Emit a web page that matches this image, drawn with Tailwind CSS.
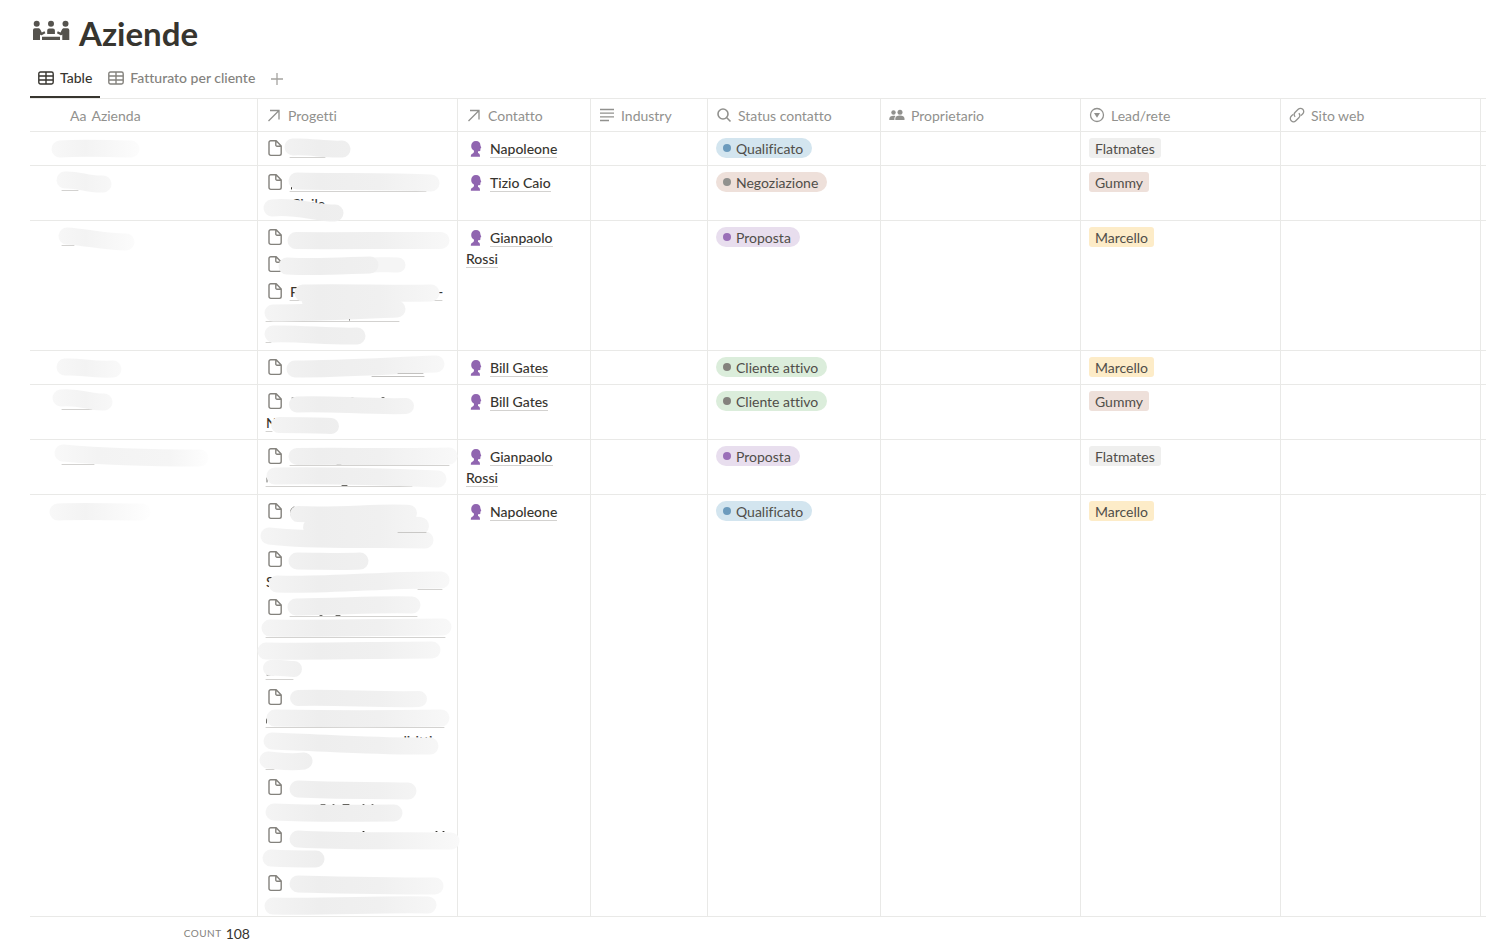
<!DOCTYPE html>
<html lang="it">

<head>
    <meta charset="UTF-8">
    <meta name="viewport" content="width=device-width, initial-scale=1.0">
    <script src="https://cdn.jsdelivr.net/npm/@tailwindcss/browser@4"></script>
    <title>Aziende</title>
</head>

<body class="bg-white font-[Lato,'Noto_Sans',sans-serif] [font-variant-ligatures:none] text-[#37352f] overflow-x-hidden">

<!-- icons and shared gradients -->
<svg class="absolute w-0 h-0" aria-hidden="true">
    <defs>
        <linearGradient id="g1" gradientUnits="userSpaceOnUse" x1="50" y1="0" x2="210" y2="0">
            <stop offset="0" stop-color="#f9f9f9"/>
            <stop offset=".3" stop-color="#f3f3f3"/>
            <stop offset=".75" stop-color="#f5f5f5"/>
            <stop offset="1" stop-color="#fefefe"/>
        </linearGradient>
        <linearGradient id="g1s" gradientUnits="userSpaceOnUse" x1="50" y1="0" x2="150" y2="0">
            <stop offset="0" stop-color="#f8f8f8"/>
            <stop offset=".35" stop-color="#f3f3f3"/>
            <stop offset="1" stop-color="#fefefe"/>
        </linearGradient>
        <linearGradient id="g2" gradientUnits="userSpaceOnUse" x1="258" y1="0" x2="460" y2="0">
            <stop offset="0" stop-color="#f5f5f5"/>
            <stop offset=".3" stop-color="#eeeeee"/>
            <stop offset=".6" stop-color="#f0f0f0"/>
            <stop offset="1" stop-color="#f9f9f9"/>
        </linearGradient>
        <symbol id="doc" viewBox="0 0 14 18">
            <path d="M3 1.7h5.2L13.2 7v7.6a1.8 1.8 0 0 1-1.8 1.8H2.8A1.8 1.8 0 0 1 1 14.600V3.500A1.800 1.800 0 0 1 2.800 1.700zM7.800 2v4a1.200 1.200 0 0 0 1.200 1.200h4" fill="none" stroke="currentColor" stroke-width="1.400" stroke-linejoin="round"/>
        </symbol>
        <symbol id="head" viewBox="0 0 12 16">
            <path d="M1.200 5C1.200 2 3 0 6 0s4.400 2 4.400 4.200L11.300 7l-.9.6v1.600c0 .8-.6 1-2.400 1V12c1.700.6 2 1.700 2 3.700H.8c0-2 .6-2.500 1.900-3.200 1.100-.7 1.500-1.700 1.200-3C2.200 8.500 1.200 7 1.200 5z" fill="currentColor"/>
        </symbol>
        <symbol id="grid" viewBox="0 0 16 14">
            <path d="M2.500 1h11A1.700 1.700 0 0 1 15.200 2.700v8.600a1.700 1.700 0 0 1-1.700 1.700h-11A1.700 1.700 0 0 1 .8 11.300V2.700A1.700 1.700 0 0 1 2.500 1zM1 5h14M1 9h14M8 1v12" fill="none" stroke="currentColor" stroke-width="1.400"/>
        </symbol>
        <symbol id="arrow" viewBox="0 0 16 16">
            <path d="M2.500 14 12.500 4M4 3.500h9V12.500" fill="none" stroke="currentColor" stroke-width="1.300"/>
        </symbol>
    </defs>
</svg>

<header class="pl-[30px]">
    <div class="flex items-start gap-2 pt-[11px] pl-[2px]">
        <svg class="w-[39px] h-6 mt-2" viewBox="32 19 39 24" fill="#55534e" aria-hidden="true">
            <circle cx="36.700" cy="23.800" r="3"/>
            <circle cx="51" cy="23.800" r="3"/>
            <circle cx="65.500" cy="23.800" r="3"/>
            <path d="M33 30a1.800 1.800 0 0 1 1.800-1.700h3.400c1 0 1.600.4 2.100 1.300l1.500 3 2.700-1.300.9 1.900-3.300 1.900c-1 .5-1.600.2-2.100-.5V40h-7z"/>
            <path d="M69.300 30a1.800 1.800 0 0 0-1.800-1.700h-3.400c-1 0-1.600.4-2.100 1.300l-1.500 3-2.700-1.300-.9 1.900 3.300 1.900c1 .5 1.600.2 2.100-.5V40h7z"/>
            <path d="M47.200 34v-3.500a2 2 0 0 1 2-2h3.700a2 2 0 0 1 2 2V34zM42 36.800h18V40H42z"/>
        </svg>
        <h1 class="text-[33px] leading-[44px] font-bold">Aziende</h1>
    </div>
    <nav class="flex items-stretch h-10 mt-1 border-b border-[#e9e9e7]">
        <a href="#" class="flex items-center gap-1.5 px-2 border-b-2 border-[#37352f] text-sm font-medium">
            <svg class="w-4 h-3.5" aria-hidden="true"><use href="#grid"/></svg>Table</a>
        <a href="#" class="flex items-center gap-1.5 px-2 border-b-2 border-transparent text-sm font-medium text-[#84827d]">
            <svg class="w-4 h-3.5" aria-hidden="true"><use href="#grid"/></svg>Fatturato per cliente</a>
        <button type="button" aria-label="Aggiungi vista" class="px-2 text-[#a5a4a0]">
            <svg class="w-3 h-3" viewBox="0 0 12 12" aria-hidden="true"><path d="M6 0v12M0 6h12" stroke="currentColor" stroke-width="1.300"/></svg>
        </button>
    </nav>
</header>

<main class="pl-[30px]">
    <table class="table-fixed w-full border-separate border-spacing-0 text-sm leading-[21px] [&_td]:border-b [&_td]:border-r [&_td]:border-[#e9e9e7] [&_td]:align-top [&_td]:px-2 [&_td]:pt-1.5 [&_td]:pb-0 [&_td:last-child]:border-r-0 [&_td:last-child]:px-0 [&_th]:border-b [&_th]:border-r [&_th]:border-[#e9e9e7] [&_th:last-child]:border-r-0 [&_th]:h-[33px] [&_th]:p-0 [&_th]:pl-2 [&_th:last-child]:pl-0 [&_th]:font-normal [&_th]:text-left [&_th]:text-[#91918e]">
        <colgroup>
            <col class="w-[228px]">
            <col class="w-[200px]">
            <col class="w-[133px]">
            <col class="w-[117px]">
            <col class="w-[173px]">
            <col class="w-[200px]">
            <col class="w-[200px]">
            <col class="w-[200px]">
            <col>
        </colgroup>
        <thead>
        <tr>
            <th><div class="flex items-center gap-[5px] pl-8"><span>Aa</span>Azienda</div></th>
            <th><div class="flex items-center gap-1.5"><svg class="w-4 h-4"><use href="#arrow"/></svg>Progetti</div></th>
            <th><div class="flex items-center gap-1.5"><svg class="w-4 h-4"><use href="#arrow"/></svg>Contatto</div></th>
            <th><div class="flex items-center gap-1.5"><svg class="w-4 h-4" viewBox="0 0 16 16"><path d="M1 2.500h14M1 6.200h14M1 9.800h14M1 13.500h9" stroke="currentColor" stroke-width="1.300"/></svg>Industry</div></th>
            <th><div class="flex items-center gap-1.5"><svg class="w-4 h-4" viewBox="0 0 16 16"><path d="M10.800 10.800 14.500 14.500M12 7a5 5 0 1 1-10 0 5 5 0 0 1 10 0z" fill="none" stroke="currentColor" stroke-width="1.600"/></svg>Status contatto</div></th>
            <th><div class="flex items-center gap-1.5"><svg class="w-4 h-4" viewBox="0 0 16 16" fill="currentColor"><circle cx="4.500" cy="5.500" r="2.200"/><circle cx="11" cy="5.300" r="2.500"/><path d="M.3 13v-1.300C.3 10 2 8.800 4.500 8.800c.8 0 1.500.1 2 .4-.8.7-1.100 1.500-1.100 2.300V13zM6.300 13v-1.500c0-1.900 1.900-3 4.600-3s4.600 1.100 4.600 3V13z"/></svg>Proprietario</div></th>
            <th><div class="flex items-center gap-1.5"><svg class="w-4 h-4" viewBox="0 0 16 16"><circle cx="8" cy="8" r="6.500" fill="none" stroke="currentColor" stroke-width="1.300"/><path d="M5 6h6l-3 4.700z" fill="currentColor"/></svg>Lead/rete</div></th>
            <th><div class="flex items-center gap-1.5"><svg class="w-4 h-4" viewBox="0 0 16 16"><path d="M6.200 9.800a3.200 3.200 0 0 1 0-4.500l3-3a3.200 3.200 0 0 1 4.600 4.500l-1.800 1.800M9.800 6.200a3.200 3.200 0 0 1 0 4.500l-3 3a3.200 3.200 0 0 1-4.600-4.500L4 7.400" fill="none" stroke="currentColor" stroke-width="1.300"/></svg>Sito web</div></th>
            <th></th>
        </tr>
        </thead>
        <tbody>
        <tr class="h-[34px]">
            <td class="relative">
                <svg class="absolute left-0 top-0 w-[228px] h-[33px] overflow-visible" viewBox="30 132 228 33" fill="none" stroke-linecap="round">
                    <path d="M60 149C85 147 110 149 131 149" stroke="url(#g1s)" stroke-width="17"/>
                </svg>
            </td>
            <td class="relative">
                <ul class="flex flex-col gap-1.5 text-[#84827d]">
                    <li class="h-[21px] pl-0.5 pt-px"><svg class="w-3.5 h-[18px]"><use href="#doc"/></svg></li>
                </ul>
                <svg class="absolute left-0 top-0 w-[199px] h-[33px] overflow-visible" viewBox="258 132 199 33" fill="none" stroke-linecap="round">
                    <path d="M290 157.500h35" stroke="#d3d2d0"/>
                    <path d="M293 147C310 146 325 150 342 149" stroke="url(#g2)" stroke-width="17"/>
                </svg>
            </td>
            <td><svg class="inline w-3 h-4 ml-1 mr-2 text-[#9065b0] align-text-bottom"><use href="#head"/></svg><a href="#" class="font-medium border-b border-[#d3d2d0]">Napoleone</a></td>
            <td></td>
            <td><span class="flex w-fit items-center h-5 gap-[5px] pl-[7px] pr-[9px] rounded-full bg-[#d3e5ef] text-[#504e49]"><i class="w-2 h-2 rounded-full bg-[#6c9bbd]"></i>Qualificato</span></td>
            <td></td>
            <td><span class="flex w-fit items-center h-5 px-1.5 rounded-[3px] bg-[#efefee] text-[#504e49]">Flatmates</span></td>
            <td></td>
            <td></td>
        </tr>
        <tr class="h-[55px]">
            <td class="relative">
                <svg class="absolute left-0 top-0 w-[228px] h-[54px] overflow-visible" viewBox="30 166 228 54" fill="none" stroke-linecap="round">
                    <path d="M62 190.500h16" stroke="#d3d2d0"/>
                    <path d="M65 180C78 179 88 185 103 184" stroke="url(#g1s)" stroke-width="17"/>
                </svg>
            </td>
            <td class="relative">
                <ul class="flex flex-col gap-1.5 text-[#84827d]">
                    <li class="h-[42px] pl-0.5 pt-px"><svg class="w-3.5 h-[18px]"><use href="#doc"/></svg></li>
                </ul>
                <svg class="absolute left-0 top-0 w-[199px] h-[54px] overflow-visible" viewBox="258 166 199 54" fill="none" stroke-linecap="round">
                    <path d="M290 191.500h136" stroke="#d3d2d0"/>
                    <path d="M291.500 186v3M397 189.500h5" stroke="#37352f"/>
                    <text x="291" y="209" fill="#37352f" class="text-sm font-medium">Civile</text>
                    <path d="M297 181C340 182 390 181 431 183" stroke="url(#g2)" stroke-width="17"/>
                    <path d="M272 208C295 205 315 213 335 213" stroke="url(#g2)" stroke-width="17"/>
                </svg>
            </td>
            <td><svg class="inline w-3 h-4 ml-1 mr-2 text-[#9065b0] align-text-bottom"><use href="#head"/></svg><a href="#" class="font-medium border-b border-[#d3d2d0]">Tizio Caio</a></td>
            <td></td>
            <td><span class="flex w-fit items-center h-5 gap-[5px] pl-[7px] pr-[9px] rounded-full bg-[#eee0da] text-[#504e49]"><i class="w-2 h-2 rounded-full bg-[#91918e]"></i>Negoziazione</span></td>
            <td></td>
            <td><span class="flex w-fit items-center h-5 px-1.5 rounded-[3px] bg-[#eee0da] text-[#504e49]">Gummy</span></td>
            <td></td>
            <td></td>
        </tr>
        <tr class="h-[130px]">
            <td class="relative">
                <svg class="absolute left-0 top-0 w-[228px] h-[129px] overflow-visible" viewBox="30 221 228 129" fill="none" stroke-linecap="round">
                    <path d="M62 245.500h12" stroke="#d3d2d0"/>
                    <path d="M67 236C85 237 105 242 126 242" stroke="url(#g1s)" stroke-width="17"/>
                </svg>
            </td>
            <td class="relative">
                <ul class="flex flex-col gap-1.5 text-[#84827d]">
                    <li class="h-[21px] pl-0.5 pt-px"><svg class="w-3.5 h-[18px]"><use href="#doc"/></svg></li>
                    <li class="h-[21px] pl-0.5 pt-px"><svg class="w-3.5 h-[18px]"><use href="#doc"/></svg></li>
                    <li class="h-[63px] pl-0.5 pt-px"><svg class="w-3.5 h-[18px]"><use href="#doc"/></svg></li>
                </ul>
                <svg class="absolute left-0 top-0 w-[199px] h-[129px] overflow-visible" viewBox="258 221 199 129" fill="none" stroke-linecap="round">
                    <path d="M290 300.500h152M266 321.500h133M266 342.500h5" stroke="#d3d2d0"/>
                    <path d="M349.500 315v5" stroke="#37352f"/>
                    <text x="290" y="297" fill="#37352f" class="text-sm font-medium">F</text>
                    <text x="438" y="297" fill="#37352f" class="text-sm font-medium">-</text>
                    <path d="M296 240.500C340 241 400 240 441 240.500" stroke="url(#g2)" stroke-width="17"/>
                    <path d="M365 265.500C375 264 387 265 398 265" stroke="#f5f5f5" stroke-width="15"/>
                    <path d="M287 266C320 268 355 265 370 265" stroke="url(#g2)" stroke-width="17"/>
                    <path d="M303 293C350 292 390 294 431 293" stroke="url(#g2)" stroke-width="17"/>
                    <path d="M305 302C330 302 360 301 385 301" stroke="url(#g2)" stroke-width="6"/>
                    <path d="M273 313C310 313 350 311 397 309" stroke="url(#g2)" stroke-width="17"/>
                    <path d="M273 334C300 333 330 337 357 336" stroke="url(#g2)" stroke-width="17"/>
                </svg>
            </td>
            <td><svg class="inline w-3 h-4 ml-1 mr-2 text-[#9065b0] align-text-bottom"><use href="#head"/></svg><a href="#" class="font-medium border-b border-[#d3d2d0]">Gianpaolo Rossi</a></td>
            <td></td>
            <td><span class="flex w-fit items-center h-5 gap-[5px] pl-[7px] pr-[9px] rounded-full bg-[#e8deee] text-[#504e49]"><i class="w-2 h-2 rounded-full bg-[#9a6fb8]"></i>Proposta</span></td>
            <td></td>
            <td><span class="flex w-fit items-center h-5 px-1.5 rounded-[3px] bg-[#fdecc8] text-[#504e49]">Marcello</span></td>
            <td></td>
            <td></td>
        </tr>
        <tr class="h-[34px]">
            <td class="relative">
                <svg class="absolute left-0 top-0 w-[228px] h-[33px] overflow-visible" viewBox="30 351 228 33" fill="none" stroke-linecap="round">
                    <path d="M65 367C80 366 90 370 113 369" stroke="url(#g1s)" stroke-width="17"/>
                </svg>
            </td>
            <td class="relative">
                <ul class="flex flex-col gap-1.5 text-[#84827d]">
                    <li class="h-[21px] pl-0.5 pt-px"><svg class="w-3.5 h-[18px]"><use href="#doc"/></svg></li>
                </ul>
                <svg class="absolute left-0 top-0 w-[199px] h-[33px] overflow-visible" viewBox="258 351 199 33" fill="none" stroke-linecap="round">
                    <path d="M372 376.500h52" stroke="#c3c2c0"/>
                    <path d="M295 369C340 369 385 366 436 364" stroke="url(#g2)" stroke-width="17"/>
                    <path d="M398 373.500h25" stroke="#c3c2c0"/>
                </svg>
            </td>
            <td><svg class="inline w-3 h-4 ml-1 mr-2 text-[#9065b0] align-text-bottom"><use href="#head"/></svg><a href="#" class="font-medium border-b border-[#d3d2d0]">Bill Gates</a></td>
            <td></td>
            <td><span class="flex w-fit items-center h-5 gap-[5px] pl-[7px] pr-[9px] rounded-full bg-[#dbeddb] text-[#504e49]"><i class="w-2 h-2 rounded-full bg-[#84827d]"></i>Cliente attivo</span></td>
            <td></td>
            <td><span class="flex w-fit items-center h-5 px-1.5 rounded-[3px] bg-[#fdecc8] text-[#504e49]">Marcello</span></td>
            <td></td>
            <td></td>
        </tr>
        <tr class="h-[55px]">
            <td class="relative">
                <svg class="absolute left-0 top-0 w-[228px] h-[54px] overflow-visible" viewBox="30 385 228 54" fill="none" stroke-linecap="round">
                    <path d="M62 409.500h30" stroke="#d3d2d0"/>
                    <path d="M61 398C80 396 90 403 104 402" stroke="url(#g1s)" stroke-width="17"/>
                </svg>
            </td>
            <td class="relative">
                <ul class="flex flex-col gap-1.5 text-[#84827d]">
                    <li class="h-[42px] pl-0.5 pt-px"><svg class="w-3.5 h-[18px]"><use href="#doc"/></svg></li>
                </ul>
                <svg class="absolute left-0 top-0 w-[199px] h-[54px] overflow-visible" viewBox="258 385 199 54" fill="none" stroke-linecap="round">
                    <path d="M266 431.500h6" stroke="#d3d2d0"/>
                    <path d="M382 397.500h2M292 398h5M349 397.500h4" stroke="#6b6a66"/>
                    <text x="266" y="428" fill="#37352f" class="text-sm font-medium">N</text>
                    <path d="M297 404.500C330 403 365 407 406 406" stroke="url(#g2)" stroke-width="16"/>
                    <path d="M279 425C300 425 315 425 331 426" stroke="url(#g2)" stroke-width="16"/>
                </svg>
            </td>
            <td><svg class="inline w-3 h-4 ml-1 mr-2 text-[#9065b0] align-text-bottom"><use href="#head"/></svg><a href="#" class="font-medium border-b border-[#d3d2d0]">Bill Gates</a></td>
            <td></td>
            <td><span class="flex w-fit items-center h-5 gap-[5px] pl-[7px] pr-[9px] rounded-full bg-[#dbeddb] text-[#504e49]"><i class="w-2 h-2 rounded-full bg-[#84827d]"></i>Cliente attivo</span></td>
            <td></td>
            <td><span class="flex w-fit items-center h-5 px-1.5 rounded-[3px] bg-[#eee0da] text-[#504e49]">Gummy</span></td>
            <td></td>
            <td></td>
        </tr>
        <tr class="h-[55px]">
            <td class="relative">
                <svg class="absolute left-0 top-0 w-[228px] h-[54px] overflow-visible" viewBox="30 440 228 54" fill="none" stroke-linecap="round">
                    <path d="M62 464.500h32" stroke="#d3d2d0"/>
                    <path d="M63 453C85 455 130 458 200 458" stroke="url(#g1)" stroke-width="17"/>
                </svg>
            </td>
            <td class="relative">
                <ul class="flex flex-col gap-1.5 text-[#84827d]">
                    <li class="h-[42px] pl-0.5 pt-px"><svg class="w-3.5 h-[18px]"><use href="#doc"/></svg></li>
                </ul>
                <svg class="absolute left-0 top-0 w-[199px] h-[54px] overflow-visible" viewBox="258 440 199 54" fill="none" stroke-linecap="round">
                    <path d="M290 465.500h159M266 486.500h146" stroke="#d3d2d0"/>
                    <path d="M337 464.500h4M363 464.500h1M342 485.500h5M267 478v4" stroke="#6b6a66"/>
                    <path d="M297 456.500C340 456 400 457 449 456" stroke="url(#g2)" stroke-width="17"/>
                    <path d="M275 476C320 475 390 477 438 479" stroke="url(#g2)" stroke-width="17"/>
                </svg>
            </td>
            <td><svg class="inline w-3 h-4 ml-1 mr-2 text-[#9065b0] align-text-bottom"><use href="#head"/></svg><a href="#" class="font-medium border-b border-[#d3d2d0]">Gianpaolo Rossi</a></td>
            <td></td>
            <td><span class="flex w-fit items-center h-5 gap-[5px] pl-[7px] pr-[9px] rounded-full bg-[#e8deee] text-[#504e49]"><i class="w-2 h-2 rounded-full bg-[#9a6fb8]"></i>Proposta</span></td>
            <td></td>
            <td><span class="flex w-fit items-center h-5 px-1.5 rounded-[3px] bg-[#efefee] text-[#504e49]">Flatmates</span></td>
            <td></td>
            <td></td>
        </tr>
        <tr class="h-[422px]">
            <td class="relative">
                <svg class="absolute left-0 top-0 w-[228px] h-[421px] overflow-visible" viewBox="30 495 228 421" fill="none" stroke-linecap="round">
                    <path d="M58 512C85 511 110 512 142 512" stroke="url(#g1s)" stroke-width="17"/>
                </svg>
            </td>
            <td class="relative">
                <ul class="flex flex-col gap-1.5 text-[#84827d]">
                    <li class="h-[42px] pl-0.5 pt-px"><svg class="w-3.5 h-[18px]"><use href="#doc"/></svg></li>
                    <li class="h-[42px] pl-0.5 pt-px"><svg class="w-3.5 h-[18px]"><use href="#doc"/></svg></li>
                    <li class="h-[84px] pl-0.5 pt-px"><svg class="w-3.5 h-[18px]"><use href="#doc"/></svg></li>
                    <li class="h-[84px] pl-0.5 pt-px"><svg class="w-3.5 h-[18px]"><use href="#doc"/></svg></li>
                    <li class="h-[42px] pl-0.5 pt-px"><svg class="w-3.5 h-[18px]"><use href="#doc"/></svg></li>
                    <li class="h-[42px] pl-0.5 pt-px"><svg class="w-3.5 h-[18px]"><use href="#doc"/></svg></li>
                    <li class="h-[37px] pl-0.5 pt-px"><svg class="w-3.5 h-[18px]"><use href="#doc"/></svg></li>
                </ul>
                <svg class="absolute left-0 top-0 w-[199px] h-[421px] overflow-visible" viewBox="258 495 199 421" fill="none" stroke-linecap="round">
                    <path d="M418 589.500h24M290 616.500h127M266 637.500h179M266 679.500h27M266 727.500h178M266 769.500h8" stroke="#d3d2d0"/>
                    <path d="M267 675h6M320 615.500h2M336 615.500h4M266.500 719v4" stroke="#6b6a66"/>
                    <text x="266" y="587" fill="#37352f" class="text-sm font-medium">S</text>
                    <text x="399" y="746" fill="#37352f" class="text-sm font-medium">diritti</text>
                    <path d="M291 515c-1-4 0-7 3-8" stroke="#6b6a66"/>
                    <path d="M321 804.500h4M333 804.500h1M343 804.500h6M363 804.500h1M372 804.500h1M363 831.500h1M436 831.500h1M443 831.500h1" stroke="#37352f"/>
                    <path d="M298 514C340 516 380 511 409 513" stroke="url(#g2)" stroke-width="16"/>
                    <path d="M312 527C350 524 390 524 420 526" stroke="url(#g2)" stroke-width="18"/>
                    <path d="M269 536C320 542 380 538 425 540" stroke="url(#g2)" stroke-width="17"/>
                    <path d="M398 532.500h28" stroke="#c9c8c6"/>
                    <path d="M297 561C320 561 340 562 360 561" stroke="url(#g2)" stroke-width="17"/>
                    <path d="M277 584C330 586 390 579 441 580" stroke="url(#g2)" stroke-width="17"/>
                    <path d="M296 607C340 607 370 604 412 605" stroke="url(#g2)" stroke-width="17"/>
                    <path d="M270 628C330 629 390 627 443 627" stroke="url(#g2)" stroke-width="17"/>
                    <path d="M266 651C320 652 380 650 432 650" stroke="url(#g2)" stroke-width="17"/>
                    <path d="M271 668C280 667 287 669 294 669" stroke="url(#g2)" stroke-width="16"/>
                    <path d="M298 698C340 697 380 700 419 699" stroke="url(#g2)" stroke-width="16"/>
                    <path d="M275 718C330 719 390 719 441 718" stroke="url(#g2)" stroke-width="17"/>
                    <path d="M272 741C330 743 380 747 430 746" stroke="url(#g2)" stroke-width="17"/>
                    <path d="M268 760C280 761 290 763 304 761" stroke="url(#g2)" stroke-width="17"/>
                    <path d="M298 789C340 791 370 790 408 791" stroke="url(#g2)" stroke-width="17"/>
                    <path d="M274 812C320 814 350 813 394 813" stroke="url(#g2)" stroke-width="17"/>
                    <path d="M298 839C350 842 400 840 451 841" stroke="url(#g2)" stroke-width="17"/>
                    <path d="M271 858C290 859 300 859 316 859" stroke="url(#g2)" stroke-width="17"/>
                    <path d="M298 884C340 885 390 886 435 886" stroke="url(#g2)" stroke-width="17"/>
                    <path d="M273 906C330 907 380 904 428 905" stroke="url(#g2)" stroke-width="17"/>
                </svg>
            </td>
            <td><svg class="inline w-3 h-4 ml-1 mr-2 text-[#9065b0] align-text-bottom"><use href="#head"/></svg><a href="#" class="font-medium border-b border-[#d3d2d0]">Napoleone</a></td>
            <td></td>
            <td><span class="flex w-fit items-center h-5 gap-[5px] pl-[7px] pr-[9px] rounded-full bg-[#d3e5ef] text-[#504e49]"><i class="w-2 h-2 rounded-full bg-[#6c9bbd]"></i>Qualificato</span></td>
            <td></td>
            <td><span class="flex w-fit items-center h-5 px-1.5 rounded-[3px] bg-[#fdecc8] text-[#504e49]">Marcello</span></td>
            <td></td>
            <td></td>
        </tr>
        </tbody>
    </table>
    <div class="flex w-[228px] items-center justify-end gap-1 pr-2 pt-1.5 text-sm leading-[21px]">
        <span class="text-[10px] uppercase tracking-wider text-[#84827d]">Count</span>
        <span>108</span>
    </div>
</main>
</body>

</html>
